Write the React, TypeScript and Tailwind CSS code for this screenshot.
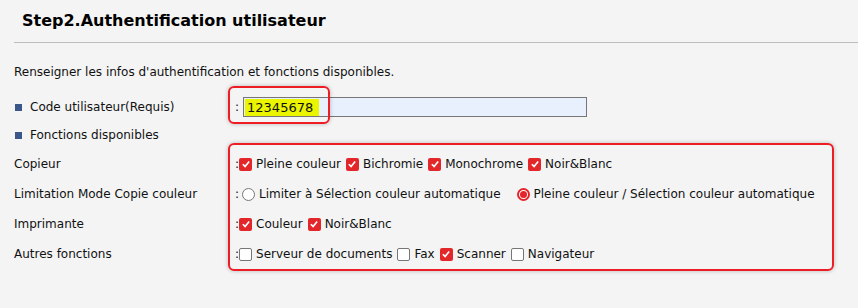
import type { ReactNode } from "react";

const Check = ({ on }: { on: boolean }) =>
  on ? (
    <span className="inline-flex h-[13px] w-[13px] shrink-0 items-center justify-center rounded-[2px] bg-[#e3262a]">
      <svg viewBox="0 0 12 12" className="h-[10px] w-[10px]">
        <path d="M2.2 6.3 L4.9 8.9 L9.8 3" fill="none" stroke="#fff" strokeWidth="2" />
      </svg>
    </span>
  ) : (
    <span className="inline-block h-[13px] w-[13px] shrink-0 rounded-[2px] border border-[#767676] bg-white" />
  );

const Radio = ({ on }: { on: boolean }) =>
  on ? (
    <span className="inline-flex h-[13px] w-[13px] shrink-0 items-center justify-center rounded-full border-2 border-[#e3262a] bg-white">
      <span className="h-[7px] w-[7px] rounded-full bg-[#e3262a]" />
    </span>
  ) : (
    <span className="inline-block h-[13px] w-[13px] shrink-0 rounded-full border border-[#767676] bg-white" />
  );

const Opt = ({ on, label, radio }: { on: boolean; label: string; radio?: boolean }) => (
  <span className="flex items-center gap-[4px]">
    {radio ? <Radio on={on} /> : <Check on={on} />}
    {label}
  </span>
);

const Row = ({ label, children }: { label: string; children: ReactNode }) => (
  <div className="flex h-[30px] items-center">
    <div className="w-[235px] pl-[14px]">{label}</div>
    <span>:</span>
    <div className="flex items-center gap-[5px]">{children}</div>
  </div>
);

export default function App() {
  return (
    <div className="h-[308px] w-[858px] bg-[#f4f4f4] text-[12px] text-[#111] [font-family:'DejaVu_Sans',Verdana,sans-serif]">
      <div className="ml-[14px] border-b border-[#bdbdbd] pb-[9px] pl-[8px] pt-[9px] text-[16px] font-bold text-black">
        Step2.Authentification utilisateur
      </div>

      <div className="pl-[14px] pt-[20px]">Renseigner les infos d'authentification et fonctions disponibles.</div>

      <div className="mt-[15px] flex h-[22px] items-center">
        <div className="flex w-[235px] items-center gap-[8px] pl-[15px]">
          <span className="h-[7px] w-[7px] bg-[#3b5688]" />
          Code utilisateur(Requis)
        </div>
        <div className="relative flex items-center">
          <div className="absolute -left-[7px] -top-[11px] h-[38px] w-[102px] rounded-[6px] border-2 border-[#ee1c25] shadow-[0_0_4px_rgba(0,0,0,0.25)]" />
          <span className="mr-[4px]">:</span>
          <div className="flex h-[20px] w-[344px] items-center border border-[#767676] bg-[#e8f0fe]">
            <span className="ml-[1px] bg-[#ebf500] px-[2px] text-[13px] leading-[17px] text-[#111]">12345678&nbsp;</span>
          </div>
        </div>
      </div>

      <div className="mt-[8px] flex items-center gap-[8px] pl-[15px]">
        <span className="h-[7px] w-[7px] bg-[#3b5688]" />
        Fonctions disponibles
      </div>

      <div className="relative mt-[5px]">
        <div className="pointer-events-none absolute left-[228px] -top-[6px] h-[128px] w-[606px] rounded-[6px] border-2 border-[#ee1c25] shadow-[0_0_4px_rgba(0,0,0,0.25)]" />
        <Row label="Copieur">
          <Opt on label="Pleine couleur" />
          <Opt on label="Bichromie" />
          <Opt on label="Monochrome" />
          <Opt on label="Noir&Blanc" />
        </Row>
        <Row label="Limitation Mode Copie couleur">
          <span className="ml-[3px]">
            <Opt radio on={false} label="Limiter à Sélection couleur automatique" />
          </span>
          <span className="ml-[11px]">
            <Opt radio on label="Pleine couleur / Sélection couleur automatique" />
          </span>
        </Row>
        <Row label="Imprimante">
          <Opt on label="Couleur" />
          <Opt on label="Noir&Blanc" />
        </Row>
        <Row label="Autres fonctions">
          <Opt on={false} label="Serveur de documents" />
          <Opt on={false} label="Fax" />
          <Opt on label="Scanner" />
          <Opt on={false} label="Navigateur" />
        </Row>
      </div>
    </div>
  );
}
